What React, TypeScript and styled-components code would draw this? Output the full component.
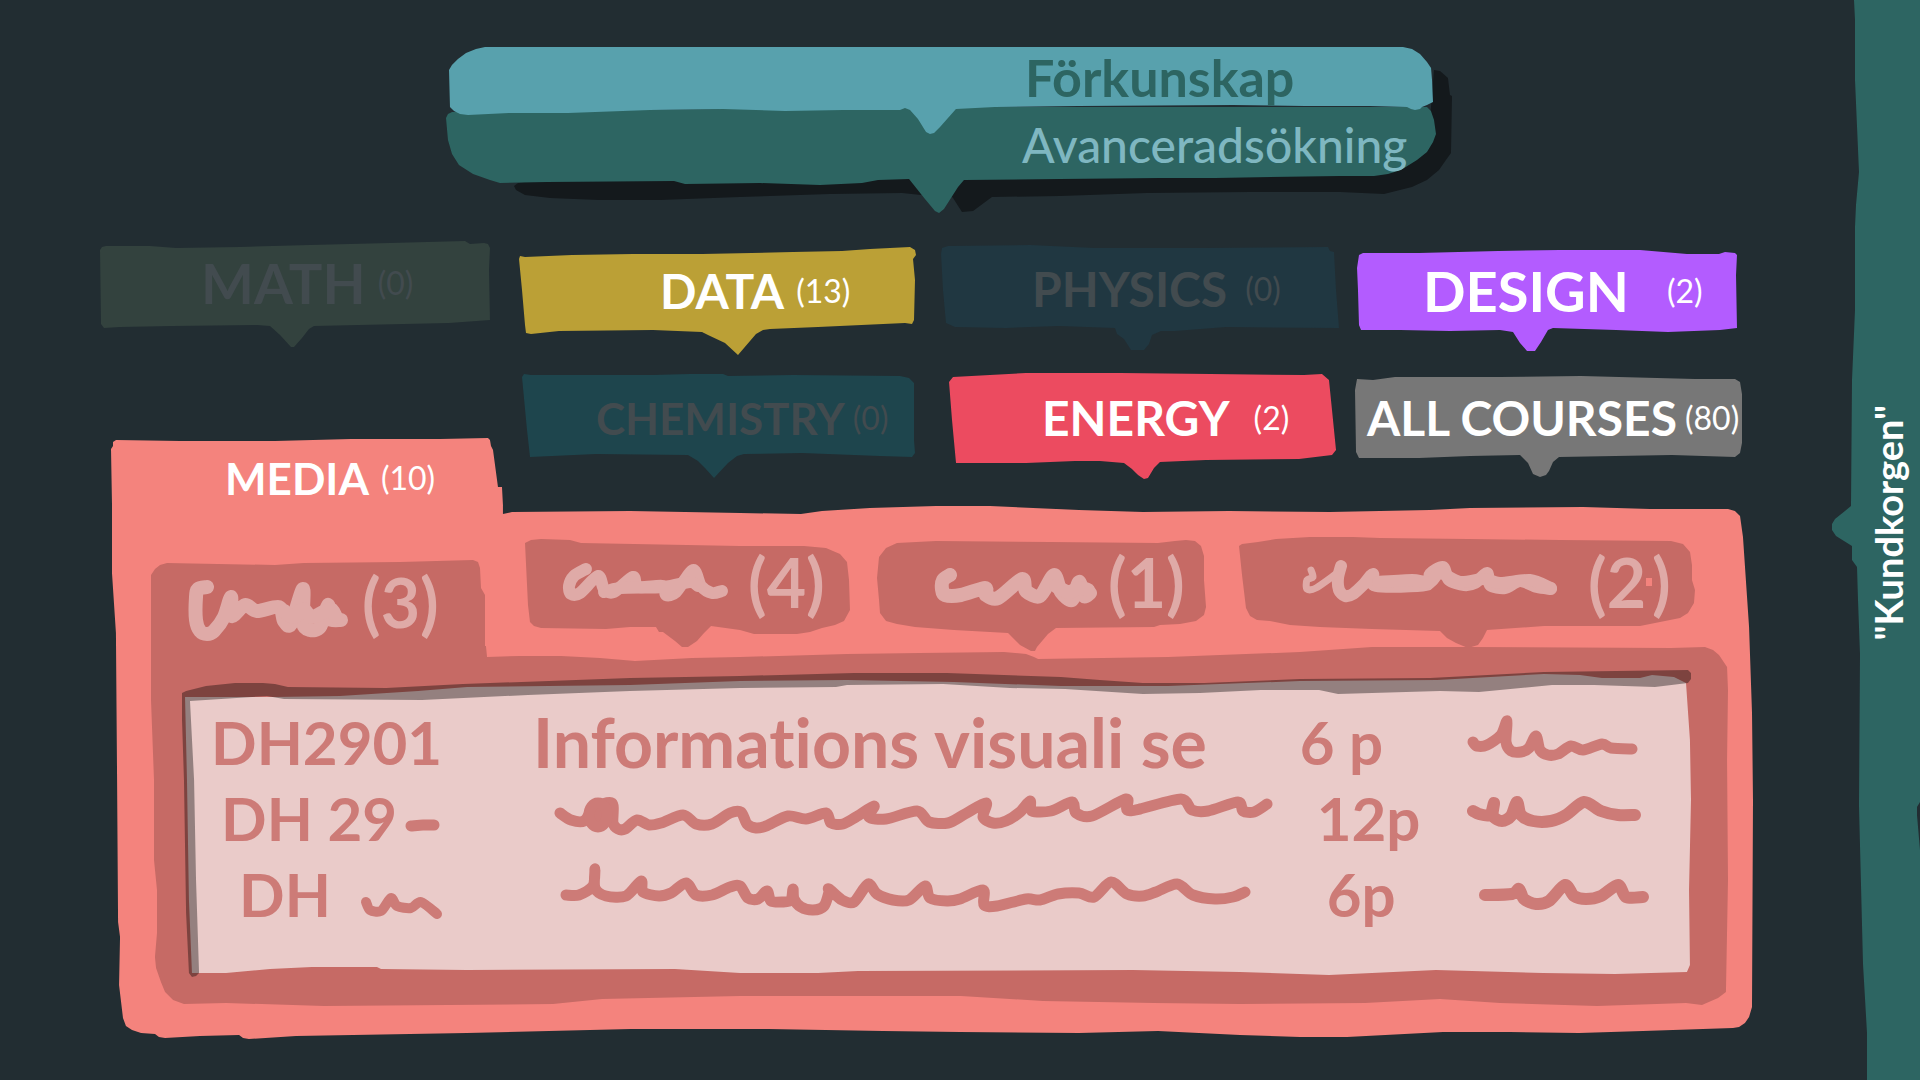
import React from "react";
import styled, { createGlobalStyle } from "styled-components";

type Box = [x: number, y: number, width: number, height: number];

/* Turns a list of artboard points into a polygon that scales with its element. */
const outline = (box: Box, points: string) => {
  const [x, y, w, h] = box;
  const list = points
    .trim()
    .split(/\s+/)
    .map((pair) => {
      const [px, py] = pair.split(",").map(Number);
      const left = (((px - x) / w) * 100).toFixed(2);
      const top = (((py - y) / h) * 100).toFixed(2);
      return `${left}% ${top}%`;
    });
  return `polygon(${list.join(", ")})`;
};

/* Runs a soft pen line through the given points. */
const penLine = (points: string) => {
  const p = points
    .trim()
    .split(/\s+/)
    .map((pair) => pair.split(",").map(Number));
  let d = `M${p[0][0]} ${p[0][1]}`;
  for (let i = 0; i < p.length - 1; i++) {
    const a = p[Math.max(i - 1, 0)];
    const b = p[i];
    const c = p[i + 1];
    const e = p[Math.min(i + 2, p.length - 1)];
    const k = 7;
    d += ` C${(b[0] + (c[0] - a[0]) / k).toFixed(1)} ${(b[1] + (c[1] - a[1]) / k).toFixed(1)} ${(
      c[0] -
      (e[0] - b[0]) / k
    ).toFixed(1)} ${(c[1] - (e[1] - b[1]) / k).toFixed(1)} ${c[0]} ${c[1]}`;
  }
  return d;
};

const color = {
  night: "#222d32",
  shadow: "#14191c",
  sky: "#58a1ad",
  skyLight: "#7fb7c1",
  teal: "#2d6562",
  coral: "#f4837d",
  clay: "#c66a65",
  blush: "#dfaaa7",
  sheet: "#eacbc9",
  ink: "#cd7b77",
  muted: "#424b4f",
};

const GlobalStyle = createGlobalStyle`
  *, *::before, *::after { box-sizing: border-box; }
  body {
    margin: 0;
    background: ${color.night};
    font-family: Lato, "Open Sans", sans-serif;
    font-variant-ligatures: none;
  }
  button { border: 0; margin: 0; font: inherit; text-align: left; cursor: pointer; }
`;

const Page = styled.div`
  display: grid;
  grid-template-columns: minmax(0, 1fr) 88px;
  min-height: 100vh;
  background: ${color.night};
`;

const Main = styled.main`
  padding: 47px 79px 40px 100px;
`;

/* ---------- search bars ---------- */

const SearchStack = styled.div`
  display: grid;
  width: 61%;
  max-width: 1006px;
  margin-left: 346px;
  margin-bottom: 28px;
`;

const SearchShadow = styled.div<{ $shape: string }>`
  grid-area: 1 / 1;
  background: ${color.shadow};
  clip-path: ${(p) => p.$shape};
`;

const SearchBars = styled.div`
  grid-area: 1 / 1;
  display: flex;
  flex-direction: column;
  padding-right: 16px;
  z-index: 1;
`;

const KnowledgeBar = styled.button<{ $shape: string }>`
  z-index: 1;
  height: 87px;
  margin: 0 3px;
  padding: 0 0 28px 576px;
  background: ${color.sky};
  color: ${color.teal};
  font-size: 52px;
  font-weight: 700;
  line-height: 56px;
  clip-path: ${(p) => p.$shape};
`;

const AdvancedBar = styled.button<{ $shape: string }>`
  height: 106px;
  margin-top: -27px;
  padding: 0 0 30px 576px;
  background: ${color.teal};
  color: ${color.skyLight};
  font-size: 48px;
  font-weight: 500;
  line-height: 56px;
  white-space: nowrap;
  clip-path: ${(p) => p.$shape};
`;

/* ---------- subject tabs ---------- */

const Subjects = styled.nav`
  display: grid;
  grid-template-columns: 403fr 400fr 404fr 388fr;
  grid-template-rows: 115px 134px;
  gap: 16px;
  padding-right: 10px;
`;

const SubjectTab = styled.button<{
  $shape: string;
  $fill: string;
  $ink: string;
  $indent: number;
  $gap: number;
  $foot?: number;
}>`
  display: flex;
  align-items: center;
  align-self: start;
  gap: ${(p) => p.$gap}px;
  height: 108px;
  padding: 0 0 ${(p) => p.$foot ?? 16}px ${(p) => p.$indent}px;
  background: ${(p) => p.$fill};
  color: ${(p) => p.$ink};
  white-space: nowrap;
  clip-path: ${(p) => p.$shape};
`;

const UpperTab = styled(SubjectTab)`
  height: 115px;
`;

const MediaTab = styled(SubjectTab)`
  align-self: end;
  height: 68px;
  margin-left: 11px;
  padding-top: 12px;
`;

const SubjectName = styled.span<{ $size: number }>`
  font-size: ${(p) => p.$size}px;
  font-weight: 700;
  line-height: 56px;
`;

const SubjectCount = styled.span`
  font-size: 32px;
  line-height: 40px;
`;

/* ---------- media panel ---------- */

const Panel = styled.section<{ $shape: string }>`
  margin-left: 11px;
  padding: 30px 0 32px;
  background: ${color.coral};
  clip-path: ${(p) => p.$shape};
`;

const Areas = styled.div`
  display: grid;
  grid-template-columns: 348fr 326fr 336fr 457fr;
  column-gap: 26px;
  align-items: start;
  height: 110px;
  padding: 0 57px 0 40px;
`;

const AreaTab = styled.button<{ $shape: string; $indent: number; $gap: number }>`
  display: flex;
  align-items: center;
  gap: ${(p) => p.$gap}px;
  height: 115px;
  padding: 0 0 16px ${(p) => p.$indent}px;
  background: ${color.clay};
  color: ${color.blush};
  clip-path: ${(p) => p.$shape};
`;

const OpenAreaTab = styled(AreaTab)`
  align-self: end;
  height: 91px;
  padding-bottom: 0;
`;

const AreaCount = styled.span`
  display: flex;
  align-items: center;
  padding-bottom: 8px;
  font-size: 68px;
  font-weight: 700;
  line-height: 72px;
`;

const Fleck = styled.i`
  width: 6px;
  height: 8px;
  background: ${color.coral};
`;

const AreaBody = styled.div<{ $shape: string }>`
  margin: 0 25px 0 40px;
  padding: 24px 37px 30px 31px;
  background: ${color.clay};
  clip-path: ${(p) => p.$shape};
`;

const SheetStack = styled.div`
  display: grid;
`;

const Sheet = styled.div<{ $shape: string }>`
  grid-area: 1 / 1;
  padding: 34px 0 45px;
  background: ${color.sheet};
  clip-path: ${(p) => p.$shape};
`;

const SheetShade = styled.div<{ $shape: string }>`
  grid-area: 1 / 1;
  background: rgba(0, 0, 0, 0.37);
  pointer-events: none;
  clip-path: ${(p) => p.$shape};
`;

const Courses = styled.table`
  width: 100%;
  table-layout: fixed;
  border-collapse: collapse;
  color: ${color.ink};
  font-size: 60px;
  font-weight: 700;
  line-height: 64px;
`;

const Column = styled.col<{ $share: number }>`
  width: ${(p) => p.$share}%;
`;

const Cell = styled.td<{ $indent: number }>`
  height: 76px;
  padding: 0 0 0 ${(p) => p.$indent}px;
  vertical-align: middle;
  white-space: nowrap;
`;

const TitleCell = styled(Cell)`
  font-size: 68px;
`;

const CellLine = styled.div<{ $gap?: number }>`
  display: flex;
  align-items: center;
  gap: ${(p) => p.$gap ?? 0}px;
`;

const Pen = styled.svg`
  display: block;
  flex: none;
  fill: none;
  stroke: currentColor;
  stroke-linecap: round;
  stroke-linejoin: round;
`;

/* ---------- basket ---------- */

const Basket = styled.aside<{ $shape: string }>`
  display: flex;
  align-items: center;
  justify-content: flex-end;
  padding: 0 4px 34px 0;
  background: ${color.teal};
  clip-path: ${(p) => p.$shape};
`;

const BasketLink = styled.a`
  color: #fff;
  font-size: 38px;
  font-weight: 700;
  line-height: 56px;
  text-decoration: none;
  writing-mode: vertical-rl;
  transform: rotate(180deg);
`;

/* ---------- outlines ---------- */

const shapes = {
  shadow: outline(
    [446, 47, 1006, 166],
    `518,183 600,170 1400,150 1430,120 1434,70 1440,71 1448,78 1450,95 1452,96 1451,153 1446,160 1439,170 1427,180
     1412,187 1384,194 1340,192 1250,192 1147,193 1060,196 992,197 973,211 962,212 953,198 945,190 921,195 902,193
     830,194 740,197 660,200 599,200 550,198 525,195 516,190 514,186`,
  ),
  knowledge: outline(
    [449, 47, 984, 87],
    `449,70 452,65 458,59 466,53 476,49 485,47 1403,47 1412,49 1420,54 1427,62 1431,68 1432,80 1433,102 1427,105
     1422,107 1420,109 1415,110 1411,109 1407,107 1370,106 1305,106 1233,105 1078,106 995,107 956,109 940,127
     934,133 930,134 926,132 918,119 910,110 905,108 900,110 843,110 785,111 723,109 650,110 568,113 509,113
     468,115 460,114 454,111 450,107`,
  ),
  advanced: outline(
    [446, 107, 990, 106],
    `446,118 448,114 452,112 900,107 1427,107 1431,111 1434,120 1436,134 1433,142 1427,152 1417,160 1401,170
     1388,174 1374,176 1340,176 1215,178 1160,178 1060,179 964,180 958,187 944,209 939,213 935,211 925,199 909,179
     878,180 862,183 820,185 760,183 685,184 674,181 547,182 500,183 490,180 473,174 459,165 452,154 448,140`,
  ),
  math: outline(
    [100, 241, 403, 115],
    `100,250 102,247 106,246 150,246 176,248 240,247 310,245 390,243 465,241 470,244 484,243 488,244 490,248 489,270
     490,320 449,323 314,326 309,329 302,338 294,347 291,347 280,335 270,326 257,325 172,326 120,327 104,328 101,324`,
  ),
  data: outline(
    [519, 241, 400, 115],
    `519,259 520,256 525,257 572,255 633,254 702,254 793,252 842,251 870,249 910,247 915,250 916,255 913,259 915,280
     914,320 912,324 905,323 818,327 770,329 763,330 756,334 738,355 725,343 708,335 702,332 653,330 559,331 531,334
     526,333 525,325 522,290`,
  ),
  physics: outline(
    [935, 241, 404, 115],
    `941,254 942,248 948,246 1030,245 1095,248 1202,248 1328,247 1330,251 1334,252 1336,290 1339,328 1226,327
     1175,331 1161,331 1152,335 1149,344 1144,350 1131,350 1124,339 1117,334 1115,328 1059,326 1006,328 955,327
     946,323 943,290`,
  ),
  design: outline(
    [1355, 241, 388, 115],
    `1357,268 1359,255 1363,253 1419,253 1498,251 1560,250 1640,250 1687,254 1719,254 1725,252 1735,253 1737,255
     1736,275 1737,328 1720,330 1668,332 1616,330 1553,328 1548,330 1541,342 1535,351 1527,351 1520,343 1513,332
     1500,330 1450,331 1400,330 1361,330 1359,325 1358,290`,
  ),
  chemistry: outline(
    [519, 372, 400, 108],
    `522,377 524,374 531,375 653,375 690,374 723,374 728,376 793,375 900,376 909,378 914,383 914,440 915,453 912,457
     880,456 802,453 744,454 737,456 728,463 714,478 705,468 698,461 688,455 596,454 530,457 527,430`,
  ),
  energy: outline(
    [935, 372, 404, 108],
    `949,382 953,377 990,375 1026,373 1120,373 1210,374 1304,375 1322,374 1329,380 1332,410 1336,450 1332,455
     1299,459 1206,460 1160,462 1154,468 1148,478 1144,479 1138,475 1132,469 1124,463 1100,461 1075,461 1026,463
     956,463 952,420`,
  ),
  all: outline(
    [1355, 372, 388, 108],
    `1355,390 1357,379 1373,380 1395,377 1500,377 1581,376 1695,379 1735,379 1740,382 1742,394 1742,443 1740,453
     1735,457 1672,455 1559,457 1553,462 1549,471 1546,475 1540,477 1533,474 1528,463 1520,455 1470,456 1419,458
     1359,458 1356,452`,
  ),
  media: outline(
    [111, 438, 392, 68],
    `111,449 113,446 113,442 116,440 180,441 275,441 351,439 440,439 488,438 490,440 491,446 493,450 498,487 502,487
     503,506 112,506`,
  ),
  panel: outline(
    [111, 506, 1642, 533],
    `112,506 503,506 503,514 512,512 630,511 740,513 801,514 822,511 870,508 936,506 990,506 1079,510 1143,512
     1229,511 1330,512 1430,510 1470,508 1583,507 1650,509 1728,509 1735,511 1740,516 1743,537 1749,627 1752,713
     1753,800 1752,1007 1749,1017 1745,1023 1739,1027 1733,1028 1643,1031 1579,1033 1510,1032 1443,1032 1347,1037
     1300,1037 1240,1035 1158,1031 1079,1033 960,1032 883,1031 768,1029 631,1029 467,1033 296,1036 249,1039 243,1038
     239,1035 200,1036 165,1038 159,1037 155,1034 141,1033 132,1030 126,1026 123,1018 119,985 120,937 118,922
     117,780 116,633 112,573`,
  ),
  areaOne: outline(
    [151, 555, 348, 91],
    `151,570 155,564 160,560 167,558 275,560 304,558 400,557 473,555 478,557 480,563 481,583 485,590 485,646 151,646`,
  ),
  areaTwo: outline(
    [525, 536, 326, 115],
    `525,543 531,540 541,539 570,540 581,543 740,546 804,546 826,548 840,554 847,562 849,580 850,610 844,621
     835,625 822,628 810,632 797,634 754,634 740,630 711,626 704,633 697,641 688,647 682,647 675,641 663,632
     659,632 656,627 630,627 606,629 541,628 534,626 530,622 528,605`,
  ),
  areaThree: outline(
    [877, 536, 336, 115],
    `877,578 879,557 886,548 897,543 936,541 1050,542 1158,543 1175,541 1186,540 1195,541 1201,546 1204,556 1204,580
     1206,607 1204,615 1196,621 1180,624 1160,625 1154,627 1056,628 1048,634 1037,647 1035,651 1031,651 1020,645
     1008,633 954,630 915,627 897,624 886,621 880,613 879,600`,
  ),
  areaFour: outline(
    [1239, 536, 457, 115],
    `1239,546 1242,544 1258,542 1276,539 1310,537 1353,537 1380,538 1468,539 1560,540 1671,541 1683,544 1690,552
     1692,565 1692,580 1695,590 1694,603 1688,613 1680,618 1640,626 1544,626 1487,630 1483,638 1478,645 1468,648
     1456,643 1447,638 1440,631 1372,629 1320,627 1290,625 1270,621 1257,620 1250,616 1246,608 1242,575`,
  ),
  body: outline(
    [151, 646, 1577, 361],
    `151,646 486,646 487,657 520,656 561,656 600,658 635,661 692,658 740,657 847,654 920,653 1004,652 1026,654
     1034,657 1038,659 1168,657 1300,652 1372,647 1468,647 1671,648 1705,647 1713,650 1719,655 1727,667 1728,690
     1727,760 1728,880 1726,992 1718,998 1702,1005 1686,1003 1597,1006 1500,1003 1440,999 1365,1003 1240,1004
     1154,1003 1043,1001 961,996 740,996 602,999 553,1004 324,1006 226,1003 184,1004 173,1000 165,992 161,982
     156,968 155,957 157,933 157,890 154,860 154,780 151,700`,
  ),
  sheet: outline(
    [182, 670, 1509, 307],
    `185,697 275,697 340,696 418,691 467,687 630,685 740,681 847,680 954,682 1061,686 1168,686 1300,681 1437,680
     1544,674 1580,675 1602,678 1640,678 1652,675 1674,677 1686,683 1690,740 1691,800 1689,890 1690,965 1687,972
     1615,974 1543,973 1436,970 1329,975 1240,972 1133,970 858,971 818,973 740,973 675,969 467,970 381,969 377,967
     312,967 270,969 226,973 192,973 189,900 187,780`,
  ),
  shade: outline(
    [182, 670, 1509, 307],
    `182,693 186,691 206,686 235,683 263,683 275,684 288,687 386,688 463,684 630,678 740,676 854,673 947,673
     1061,677 1100,680 1143,683 1204,683 1300,679 1430,678 1544,672 1688,670 1691,673 1691,679 1688,683 1655,687
     1594,685 1552,685 1479,692 1440,691 1338,694 1319,690 1261,690 1200,693 1143,694 1065,689 1010,688 943,684
     847,685 836,687 740,688 630,691 528,695 422,700 284,699 267,696 190,701 194,780 196,880 199,973 196,976
     192,977 189,973 186,913 184,780 182,720`,
  ),
  basket: outline(
    [1832, 0, 88, 1080],
    `1854,0 1855,20 1855,80 1859,172 1856,205 1855,227 1855,310 1852,380 1851,506 1845,511 1835,519 1832,524
     1832,530 1836,536 1852,546 1852,560 1857,567 1858,600 1860,654 1859,806 1863,964 1867,1033 1867,1080 1920,1080
     1920,850 1917,815 1917,807 1920,802 1920,0`,
  ),
};

const Scribble = ({ box, line, weight, children }: { box: Box; line: string; weight: number; children?: React.ReactNode }) => (
  <Pen width={box[2]} height={box[3]} viewBox={box.join(" ")} strokeWidth={weight} aria-hidden="true">
    <path d={penLine(line)} />
    {children}
  </Pen>
);

const upperSubjects = [
  { name: "MATH", count: 0, shape: shapes.math, fill: "#33423e", ink: color.muted, indent: 101, gap: 12, size: 56, foot: 32 },
  { name: "DATA", count: 13, shape: shapes.data, fill: "#bba036", ink: "#fff", indent: 141, gap: 12, size: 48, foot: 16 },
  { name: "PHYSICS", count: 0, shape: shapes.physics, fill: "#203741", ink: color.muted, indent: 97, gap: 18, size: 48, foot: 20 },
  { name: "DESIGN", count: 2, shape: shapes.design, fill: "#b35cff", ink: "#fff", indent: 68, gap: 38, size: 56, foot: 16 },
];

const lowerSubjects = [
  { name: "CHEMISTRY", count: 0, shape: shapes.chemistry, fill: "#1e454d", ink: color.muted, indent: 77, gap: 8, size: 44 },
  { name: "ENERGY", count: 2, shape: shapes.energy, fill: "#ec4b60", ink: "#fff", indent: 107, gap: 24, size: 48 },
  { name: "ALL COURSES", count: 80, shape: shapes.all, fill: "#777777", ink: "#fff", indent: 12, gap: 8, size: 48 },
];

export default function App() {
  return (
    <>
      <GlobalStyle />
      <Page>
        <Main>
          <SearchStack>
            <SearchShadow $shape={shapes.shadow} />
            <SearchBars>
              <KnowledgeBar type="button" $shape={shapes.knowledge}>
                Förkunskap
              </KnowledgeBar>
              <AdvancedBar type="button" $shape={shapes.advanced}>
                Avanceradsökning
              </AdvancedBar>
            </SearchBars>
          </SearchStack>

          <Subjects>
            {upperSubjects.map((s) => (
              <UpperTab
                key={s.name}
                type="button"
                $shape={s.shape}
                $fill={s.fill}
                $ink={s.ink}
                $indent={s.indent}
                $gap={s.gap}
                $foot={s.foot}
              >
                <SubjectName $size={s.size}>{s.name}</SubjectName>
                <SubjectCount>({s.count})</SubjectCount>
              </UpperTab>
            ))}
            <MediaTab type="button" $shape={shapes.media} $fill={color.coral} $ink="#fff" $indent={114} $gap={12} $foot={0}>
              <SubjectName $size={44}>MEDIA</SubjectName>
              <SubjectCount>(10)</SubjectCount>
            </MediaTab>
            {lowerSubjects.map((s) => (
              <SubjectTab key={s.name} type="button" $shape={s.shape} $fill={s.fill} $ink={s.ink} $indent={s.indent} $gap={s.gap}>
                <SubjectName $size={s.size}>{s.name}</SubjectName>
                <SubjectCount>({s.count})</SubjectCount>
              </SubjectTab>
            ))}
          </Subjects>

          <Panel $shape={shapes.panel}>
            <Areas>
              <OpenAreaTab type="button" $shape={shapes.areaOne} $indent={37} $gap={12}>
                <Scribble
                  box={[188, 555, 162, 91]}
                  weight={14}
                  line="207,582 198,584 196,592 196,615 200,626 207,629 214,626 224,612 231,592 232,611 245,600 257,606 279,602 284,616 291,619 303,584 303,618 310,625 320,622 328,600 329,614 341,615"
                >
                  <path d={penLine("284,606 294,612 303,604 312,612 330,604 336,612")} />
                </Scribble>
                <AreaCount>(3)</AreaCount>
              </OpenAreaTab>
              <AreaTab type="button" $shape={shapes.areaTwo} $indent={37} $gap={18}>
                <Scribble
                  box={[562, 536, 168, 99]}
                  weight={12}
                  line="586,569 574,576 569,586 571,594 580,593 598,576 604,589 614,592 633,577 638,587 663,586 666,595 676,592 693,570 701,586 712,593 722,591"
                >
                  <path d={penLine("604,592 620,588 664,587 690,582 698,586")} />
                </Scribble>
                <AreaCount>(4)</AreaCount>
              </AreaTab>
              <AreaTab type="button" $shape={shapes.areaThree} $indent={57} $gap={8}>
                <Scribble
                  box={[934, 536, 166, 99]}
                  weight={14}
                  line="950,575 943,580 942,589 945,595 961,595 985,588 986,595 998,598 1022,579 1026,591 1040,596 1054,575 1061,592 1072,600 1079,582 1084,596 1090,593"
                >
                  <path d={penLine("1056,586 1068,592 1080,588 1088,590")} />
                </Scribble>
                <AreaCount>(1)</AreaCount>
              </AreaTab>
              <AreaTab type="button" $shape={shapes.areaFour} $indent={63} $gap={28}>
                <Scribble
                  box={[1302, 536, 258, 99]}
                  weight={12}
                  line="1341,566 1338,578 1339,590 1345,596 1353,594 1364,584 1373,574 1376,586 1426,585 1430,574 1443,567 1449,580 1464,585 1475,583 1487,573 1490,585 1505,588 1520,581 1537,587 1551,589"
                >
                  <path d={penLine("1378,582 1412,580 1430,582 1440,573 1460,582 1484,579 1500,583 1530,580 1551,588")} />
                  <path d={penLine("1311,570 1313,577 1307,580 1307,589 1316,588 1336,574")} strokeWidth={7} />
                </Scribble>
                <AreaCount>
                  (2
                  <Fleck />)
                </AreaCount>
              </AreaTab>
            </Areas>

            <AreaBody $shape={shapes.body}>
              <SheetStack>
                <Sheet $shape={shapes.sheet}>
                  <Courses>
                    <colgroup>
                      <Column $share={23} />
                      <Column $share={51} />
                      <Column $share={11} />
                      <Column $share={15} />
                    </colgroup>
                    <tbody>
                      <tr>
                        <Cell $indent={29}>DH2901</Cell>
                        <TitleCell $indent={4}>Informations visuali se</TitleCell>
                        <Cell $indent={1}>6 p</Cell>
                        <Cell $indent={2}>
                          <Scribble
                            box={[1467, 704, 174, 76]}
                            weight={11}
                            line="1473,742 1477,746 1487,745 1501,735 1507,721 1506,742 1511,751 1521,752 1529,748 1536,736 1540,750 1548,755 1558,754 1571,746 1583,750 1602,744 1611,748 1632,749"
                          />
                        </Cell>
                      </tr>
                      <tr>
                        <Cell $indent={39}>
                          <CellLine $gap={8}>
                            DH 29
                            <Scribble box={[408, 780, 36, 76]} weight={11} line="414,826 426,825 437,825" />
                          </CellLine>
                        </Cell>
                        <Cell $indent={24}>
                          <Scribble
                            box={[553, 780, 722, 76]}
                            weight={11}
                            line="560,813 571,820 584,821 594,808 612,803 613,823 618,829 625,829 637,820 649,825 661,823 683,815 696,824 712,824 730,813 741,812 747,824 756,828 766,826 788,816 806,819 826,813 831,823 843,824 856,817 874,806 869,817 886,819 917,811 929,822 948,823 965,814 986,803 983,817 993,823 1006,821 1020,812 1030,801 1032,811 1051,811 1072,802 1076,813 1092,816 1126,799 1127,810 1140,809 1181,799 1192,810 1208,811 1238,802 1243,811 1254,812 1267,804"
                          >
                            <ellipse cx="598" cy="815" rx="9" ry="12" fill="currentColor" />
                          </Scribble>
                        </Cell>
                        <Cell $indent={18}>12p</Cell>
                        <Cell $indent={2}>
                          <Scribble
                            box={[1467, 780, 180, 76]}
                            weight={12}
                            line="1473,811 1479,814 1490,815 1494,803 1493,816 1502,821 1511,816 1517,802 1521,815 1533,821 1551,821 1566,815 1584,802 1601,811 1618,815 1635,815"
                          />
                        </Cell>
                      </tr>
                      <tr>
                        <Cell $indent={57}>
                          <CellLine $gap={28}>
                            DH
                            <Scribble box={[358, 856, 86, 76]} weight={10} line="365,902 369,910 380,911 390,898 396,906 410,908 420,902 436,914" />
                          </CellLine>
                        </Cell>
                        <Cell $indent={24}>
                          <Scribble
                            box={[553, 856, 702, 76]}
                            weight={11}
                            line="566,895 579,895 593,886 595,869 595,888 606,896 626,896 641,881 643,892 659,896 671,893 686,883 696,895 712,895 730,887 740,886 748,898 758,899 767,891 771,901 783,902 791,900 793,889 794,899 801,907 813,910 824,906 829,892 829,889 842,900 854,902 868,884 877,894 893,900 909,900 925,886 930,898 947,901 960,899 983,890 984,905 997,906 1026,899 1040,900 1058,894 1079,893 1094,897 1111,882 1127,894 1143,896 1156,892 1177,884 1193,895 1215,899 1233,897 1245,892"
                          />
                        </Cell>
                        <Cell $indent={28}>6p</Cell>
                        <Cell $indent={12}>
                          <Scribble
                            box={[1477, 856, 174, 76]}
                            weight={12}
                            line="1485,895 1512,894 1519,889 1524,899 1536,904 1549,901 1565,885 1574,896 1586,899 1601,896 1618,885 1626,897 1643,897"
                          />
                        </Cell>
                      </tr>
                    </tbody>
                  </Courses>
                </Sheet>
                <SheetShade $shape={shapes.shade} />
              </SheetStack>
            </AreaBody>
          </Panel>
        </Main>

        <Basket $shape={shapes.basket}>
          <BasketLink href="#kundkorgen">"Kundkorgen"</BasketLink>
        </Basket>
      </Page>
    </>
  );
}
